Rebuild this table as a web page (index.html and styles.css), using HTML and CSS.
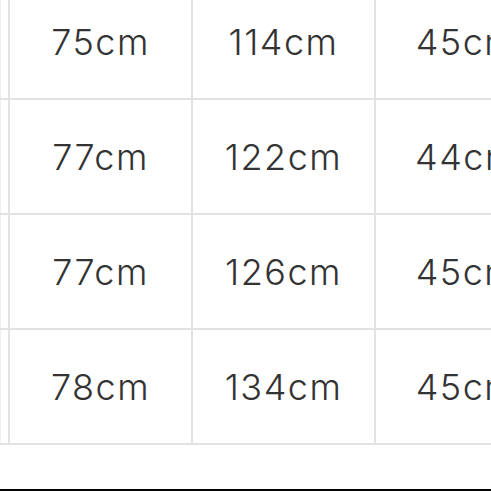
FILE: index.html
```html
<!DOCTYPE html>
<html lang="ja">
<head>
<meta charset="utf-8">
<link rel="stylesheet" href="styles.css">
</head>
<body>
<div class="page">
  <div class="grid">
    <div class="edge"></div><div class="cell">75cm</div><div class="cell">114cm</div><div class="cell">45cm</div>
    <div class="edge"></div><div class="cell">77cm</div><div class="cell">122cm</div><div class="cell">44cm</div>
    <div class="edge"></div><div class="cell">77cm</div><div class="cell">126cm</div><div class="cell">45cm</div>
    <div class="edge"></div><div class="cell">78cm</div><div class="cell">134cm</div><div class="cell">45cm</div>
  </div>
  <div class="spacer"></div>
  <div class="bar"></div>
</div>
</body>
</html>
```
FILE: styles.css
```css
html, body {
  margin: 0;
  padding: 0;
  background: #fff;
  overflow: hidden;
  width: 491px;
  height: 491px;
}
.page {
  display: flex;
  flex-direction: column;
  width: 491px;
  height: 491px;
  overflow: hidden;
}
.grid {
  margin-top: -15px;
  display: grid;
  grid-template-columns: 8px 181px 181px 181px;
  grid-auto-rows: 113px;
  gap: 2px;
  background: #e2e2e2;
  padding-bottom: 2px;
  width: max-content;
  flex: none;
}
.edge {
  background: #fff;
  border-left: 1px solid #efefef;
}
.cell {
  background: #fff;
  display: flex;
  align-items: center;
  justify-content: center;
  font-family: Inter, "Noto Sans CJK JP", sans-serif;
  font-weight: 300;
  font-size: 36px;
  color: #333;
  letter-spacing: 1.5px;
  padding-top: 1px;
}
.spacer {
  flex: 1;
}
.bar {
  height: 2px;
  background: #000;
  flex: none;
}
```
